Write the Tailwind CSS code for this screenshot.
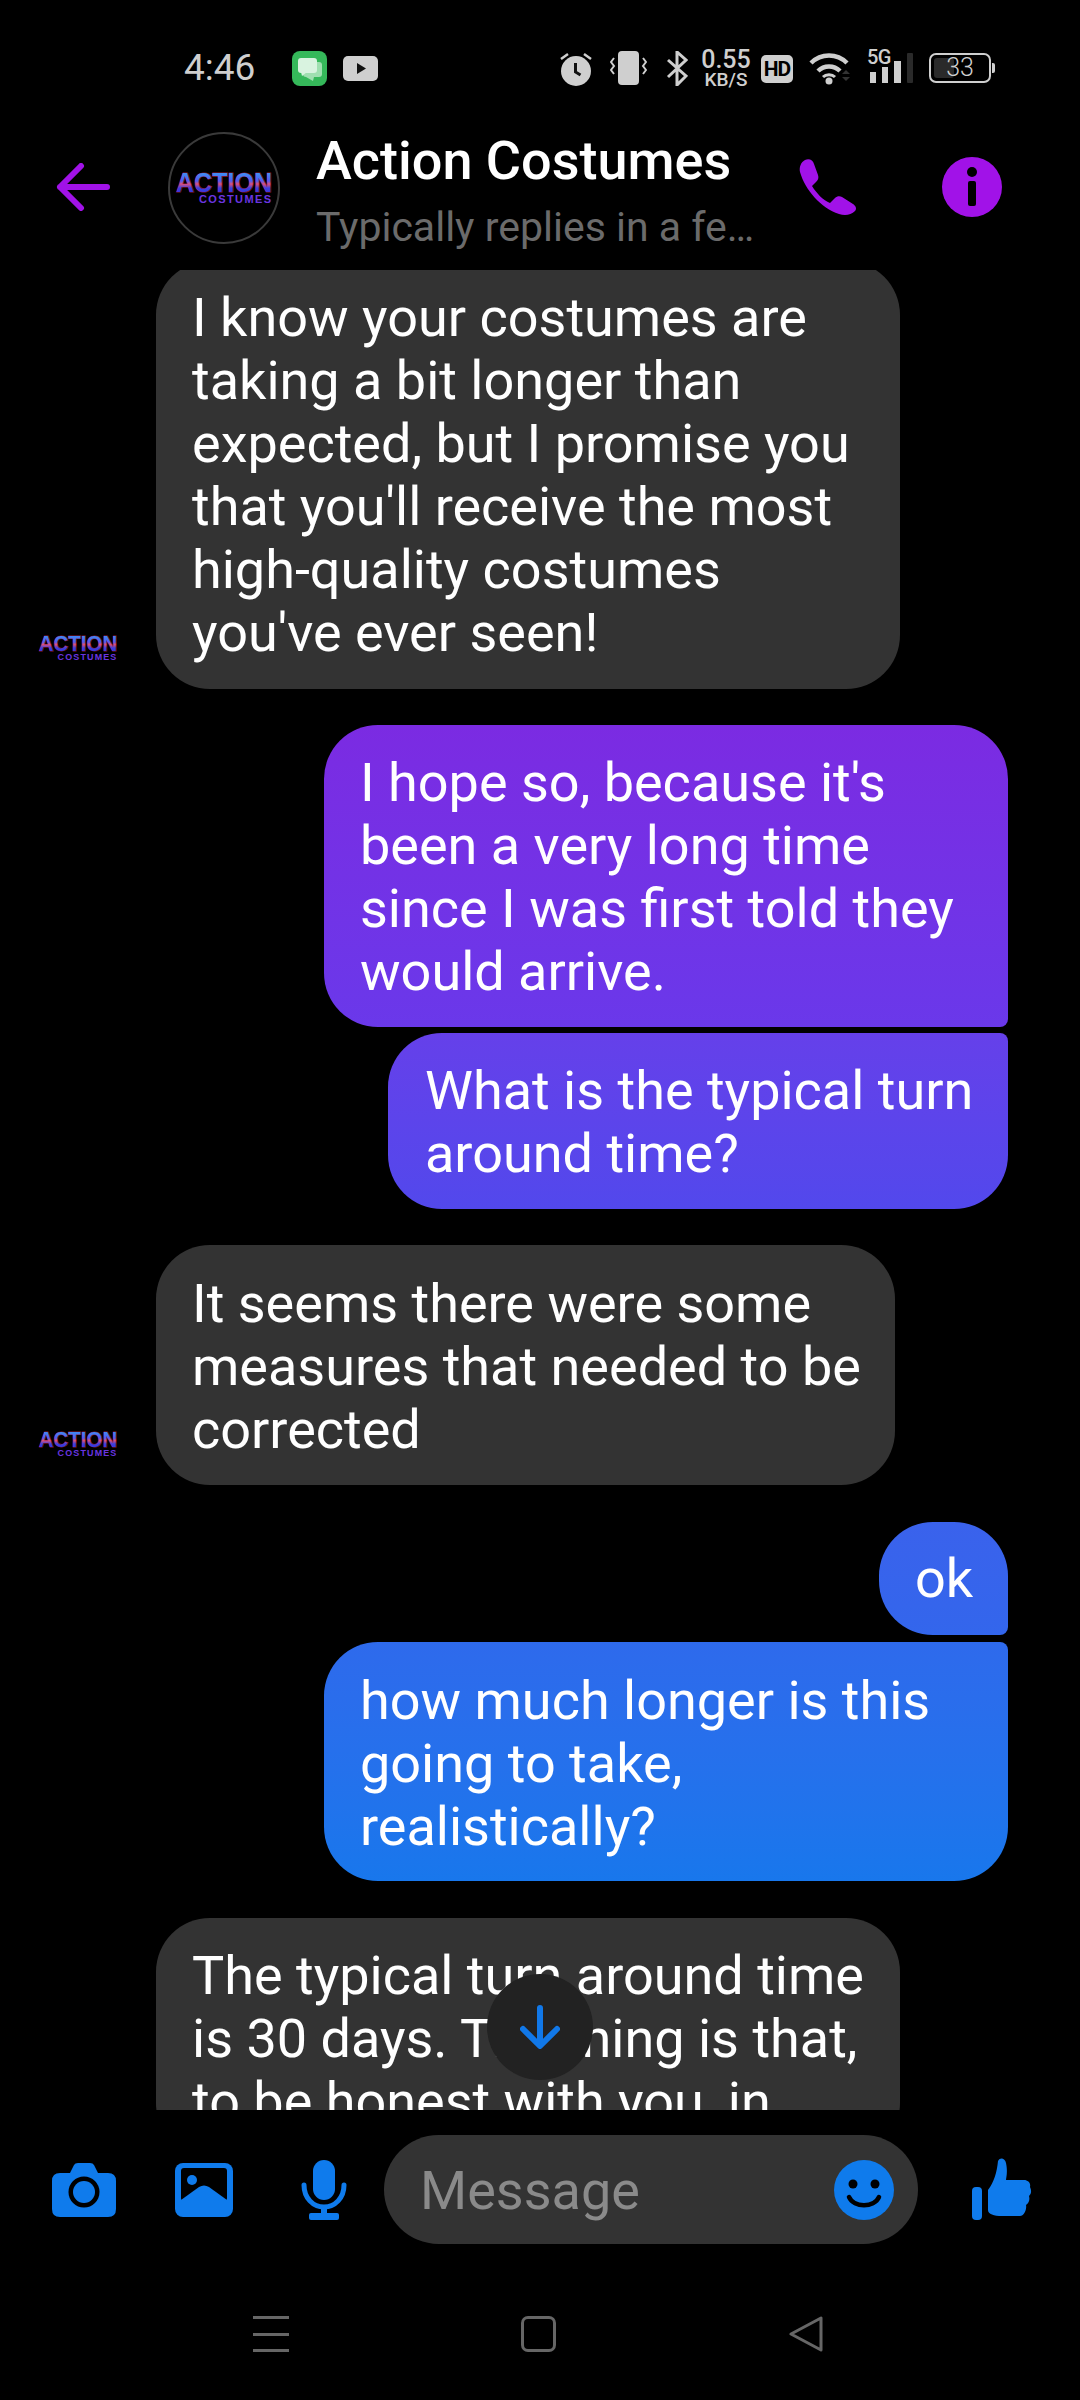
<!doctype html>
<html lang="en">
<head>
  <meta charset="UTF-8">
  <meta name="viewport" content="width=device-width, initial-scale=1.0">
  <title>Action Costumes</title>
  <script src="https://cdn.jsdelivr.net/npm/@tailwindcss/browser@4"></script>
</head>
<body class="bg-black">
  <div class="w-[1080px] h-[2400px] bg-black flex flex-col overflow-hidden font-['Roboto',sans-serif]">

    <!-- status bar -->
    <div class="h-[132px] pt-[50px] pl-[184px] flex items-start text-[#cfcfcf]">
      <span class="text-[37px] leading-[36px] w-[108px]">4:46</span>
      <svg class="w-[35px] h-[35px] mt-[1px]" viewBox="0 0 35 35">
        <rect width="35" height="35" rx="8" fill="#35b85a"/>
        <rect x="11" y="11" width="19" height="15" rx="3" fill="#9fdfb0"/>
        <path d="M14 26h8l-1 4z" fill="#9fdfb0"/>
        <rect x="6" y="7" width="19" height="15" rx="3" fill="#d9f3e0"/>
        <path d="M9 21h6l-5 4z" fill="#d9f3e0"/>
      </svg>
      <svg class="w-[35px] h-[25px] mt-[6px] ml-[16px]" viewBox="0 0 35 25">
        <rect width="35" height="25" rx="5" fill="#cfcfcf"/>
        <path d="M14 7l9 5.500-9 5.500z" fill="#111"/>
      </svg>

      <svg class="w-[32px] h-[35px] ml-[182px] mt-[1px]" viewBox="0 0 32 35">
        <circle cx="16" cy="20" r="15" fill="#cfcfcf"/>
        <path d="M15.500 12v9l5 3" fill="none" stroke="#111" stroke-width="3"/>
        <path d="M1 8l7-5M31 8l-7-5" stroke="#cfcfcf" stroke-width="2.500"/>
      </svg>
      <svg class="w-[37px] h-[35px] ml-[18px] mt-[1px]" viewBox="0 0 37 35">
        <rect x="8" y="0" width="21" height="34" rx="4" fill="#cfcfcf"/>
        <path d="M4 7l-3 4 3 4-3 4 3 4M33 7l3 4-3 4 3 4-3 4" fill="none" stroke="#cfcfcf" stroke-width="2"/>
      </svg>
      <svg class="w-[22px] h-[35px] ml-[19px] mt-[1px]" viewBox="0 0 22 35">
        <path d="M2 9l18 16-9 9V1l9 8L2 26" fill="none" stroke="#cfcfcf" stroke-width="3"/>
      </svg>
      <div class="w-[52px] ml-[12px] mt-[-2px] flex flex-col items-center font-medium">
        <span class="text-[25px] leading-[23px]">0.55</span>
        <span class="text-[19px] leading-[17px]">KB/S</span>
      </div>
      <div class="w-[32px] h-[28px] ml-[9px] mt-[5px] rounded-[5px] bg-[#cfcfcf] text-black text-[21px] leading-[28px] font-bold text-center tracking-[-1px]">HD</div>
      <svg class="w-[42px] h-[36px] ml-[16px]" viewBox="0 0 42 36">
        <path d="M2 13C12 3 28 3 38 13M9 21C15 15 25 15 31 21" fill="none" stroke="#cfcfcf" stroke-width="4.500"/>
        <path d="M14 27C17 24 23 24 26 27" fill="none" stroke="#cfcfcf" stroke-width="3"/>
        <circle cx="20" cy="31" r="3.500" fill="#cfcfcf"/>
        <path d="M33 24l4-4 4 4zM33 27l4 4 4-4z" fill="#333"/>
      </svg>
      <svg class="w-[48px] h-[36px] ml-[16px] overflow-visible" viewBox="0 0 48 36">
        <text x="0" y="14" font-family="Roboto" font-weight="500" font-size="20" letter-spacing="-0.5" fill="#cfcfcf">5G</text>
        <rect x="3" y="22" width="6" height="11" fill="#cfcfcf"/>
        <rect x="15" y="17" width="6" height="16" fill="#cfcfcf"/>
        <rect x="27" y="11" width="7" height="22" fill="#cfcfcf"/>
        <rect x="40" y="3" width="6" height="30" rx="1" fill="#2a2a2a"/>
      </svg>
      <div class="relative w-[62px] h-[30px] ml-[14px] mt-[3px] rounded-[7px] border-2 border-[#cfcfcf]">
        <div class="absolute left-[3px] top-[3px] bottom-[3px] w-[20px] rounded-[3px] bg-[#2a2a2a]"></div>
        <span class="absolute inset-0 text-center text-[25px] leading-[26px] font-light">33</span>
      </div>
      <div class="w-[3px] h-[10px] mt-[13px] ml-[1px] bg-[#cfcfcf] rounded-r-[2px]"></div>
    </div>

    <!-- header -->
    <div class="h-[138px] flex items-start">
      <svg class="w-[54px] h-[48px] ml-[56px] mt-[31px]" viewBox="0 0 54 48">
        <path d="M25 3L4 24l21 21M4 24h47" fill="none" stroke="#a112e8" stroke-width="6" stroke-linecap="round" stroke-linejoin="round"/>
      </svg>
      <div class="w-[112px] h-[112px] ml-[58px] rounded-full border-2 border-[#3a3a3a] flex items-center justify-center">
        <svg class="w-[98px] h-[34px] overflow-visible" viewBox="0 0 98 34">
          <defs>
            <linearGradient id="logoFill" x1="0" y1="0" x2="0" y2="1">
              <stop offset="0" stop-color="#35b5f5"/>
              <stop offset="0.45" stop-color="#4f5cf0"/>
              <stop offset="0.55" stop-color="#d9507f"/>
              <stop offset="0.68" stop-color="#3a40e0"/>
              <stop offset="1" stop-color="#3a2ad0"/>
            </linearGradient>
          </defs>
          <text x="1" y="21" textLength="96" lengthAdjust="spacingAndGlyphs" font-family="Liberation Sans" font-weight="700" font-size="28" fill="url(#logoFill)" stroke="#8a1530" stroke-width="1.2" paint-order="stroke">ACTION</text>
          <text x="24" y="32" textLength="72" lengthAdjust="spacing" font-family="Liberation Sans" font-weight="700" font-size="11" fill="#6a35e0">COSTUMES</text>
        </svg>
      </div>
      <div class="w-[470px] ml-[36px] flex flex-col">
        <span class="text-[54px] leading-[58px] font-medium text-white whitespace-nowrap">Action Costumes</span>
        <span class="text-[41px] leading-[50px] text-[#6b6b6b] mt-[12px] whitespace-nowrap">Typically replies in a fe…</span>
      </div>
      <svg class="w-[58px] h-[58px] ml-[13px] mt-[26px]" viewBox="0 0 58 58">
        <path d="M6 2C10 0 14 2 15 6L19 17C20 20 19 22 17 24L13 28C18 36 24 42 31 45L36 40C38 38 41 38 43 39L54 46C57 48 58 51 56 53C52 57 46 58 40 56C22 50 6 32 1 14C0 9 2 4 6 2Z" fill="#a112e8"/>
      </svg>
      <svg class="w-[60px] h-[60px] ml-[85px] mt-[25px]" viewBox="0 0 60 60">
        <circle cx="30" cy="30" r="30" fill="#a112e8"/>
        <circle cx="30" cy="15" r="5" fill="#000"/>
        <rect x="26" y="24" width="8" height="25" rx="2" fill="#000"/>
      </svg>
    </div>

    <!-- messages -->
    <div class="relative h-[1840px] overflow-hidden text-white text-[54px] leading-[63px]">
      <div class="flex flex-col mt-[-9px]">
        <div class="flex items-end pl-[38px]">
          <svg class="w-[80px] h-[30px] mr-[38px] mb-[26px] overflow-visible" viewBox="0 0 98 34">
            <text x="1" y="21" textLength="96" lengthAdjust="spacingAndGlyphs" font-family="Liberation Sans" font-weight="700" font-size="28" fill="url(#logoFill)" stroke="#8a1530" stroke-width="1.2" paint-order="stroke">ACTION</text>
            <text x="24" y="32" textLength="72" lengthAdjust="spacing" font-family="Liberation Sans" font-weight="700" font-size="11" fill="#6a35e0">COSTUMES</text>
          </svg>
          <div class="w-[744px] px-[36px] py-[25px] rounded-[54px] bg-[#333333] whitespace-nowrap">I know your costumes are<br>taking a bit longer than<br>expected, but I promise you<br>that you'll receive the most<br>high-quality costumes<br>you've ever seen!</div>
        </div>

        <div class="flex flex-col items-end pr-[72px] mt-[36px]">
          <div class="w-[684px] px-[36px] pt-[26px] pb-[24px] rounded-[54px] rounded-br-[8px] bg-linear-to-b from-[#7b2be2] to-[#6a38ea] whitespace-nowrap">I hope so, because it's<br>been a very long time<br>since I was first told they<br>would arrive.</div>
          <div class="w-[620px] mt-[6px] px-[37px] pt-[26px] pb-[24px] rounded-[54px] rounded-tr-[8px] bg-linear-to-b from-[#6540ea] to-[#5248ec] whitespace-nowrap">What is the typical turn<br>around time?</div>
        </div>

        <div class="flex items-end pl-[38px] mt-[36px]">
          <svg class="w-[80px] h-[30px] mr-[38px] mb-[26px] overflow-visible" viewBox="0 0 98 34">
            <text x="1" y="21" textLength="96" lengthAdjust="spacingAndGlyphs" font-family="Liberation Sans" font-weight="700" font-size="28" fill="url(#logoFill)" stroke="#8a1530" stroke-width="1.2" paint-order="stroke">ACTION</text>
            <text x="24" y="32" textLength="72" lengthAdjust="spacing" font-family="Liberation Sans" font-weight="700" font-size="11" fill="#6a35e0">COSTUMES</text>
          </svg>
          <div class="w-[739px] px-[36px] pt-[27px] pb-[24px] rounded-[54px] bg-[#333333] whitespace-nowrap">It seems there were some<br>measures that needed to be<br>corrected</div>
        </div>

        <div class="flex flex-col items-end pr-[72px] mt-[37px]">
          <div class="w-[129px] h-[113px] px-[36px] py-[25px] rounded-[54px] rounded-br-[8px] bg-linear-to-b from-[#3a62ec] to-[#3366ec]">ok</div>
          <div class="w-[684px] mt-[7px] px-[36px] pt-[27px] pb-[23px] rounded-[54px] rounded-tr-[8px] bg-linear-to-b from-[#2e6aec] to-[#1877ec] whitespace-nowrap">how much longer is this<br>going to take,<br>realistically?</div>
        </div>

        <div class="flex pl-[156px] mt-[37px]">
          <div class="w-[744px] px-[36px] pt-[26px] pb-[24px] rounded-[54px] bg-[#333333] whitespace-nowrap">The typical turn around time<br>is 30 days. The thing is that,<br>to be honest with you, in</div>
        </div>
      </div>

      <div class="absolute left-[487px] top-[1704px] w-[106px] h-[106px] rounded-full bg-[#222222] flex items-center justify-center">
        <svg class="w-[40px] h-[44px]" viewBox="0 0 40 44">
          <path d="M20 3v36M3 24l17 17 17-17" fill="none" stroke="#1178e8" stroke-width="6" stroke-linecap="round" stroke-linejoin="round"/>
        </svg>
      </div>
    </div>

    <!-- composer -->
    <div class="h-[160px] pt-[25px] flex items-start">
      <svg class="w-[64px] h-[54px] ml-[52px] mt-[28px]" viewBox="0 0 64 54">
        <path d="M18 10L22 2Q23 0 26 0H38Q41 0 42 2L46 10H56Q64 10 64 18V46Q64 54 56 54H8Q0 54 0 46V18Q0 10 8 10Z" fill="#0f7bec"/>
        <circle cx="32" cy="29" r="15.500" fill="#000"/>
        <circle cx="32" cy="29" r="11" fill="#0f7bec"/>
      </svg>
      <svg class="w-[58px] h-[54px] ml-[59px] mt-[28px]" viewBox="0 0 58 54">
        <rect width="58" height="54" rx="8" fill="#0f7bec"/>
        <rect x="6" y="5" width="46" height="33" rx="3" fill="#000"/>
        <circle cx="17" cy="17" r="5" fill="#0f7bec"/>
        <path d="M6 37L24 24Q29 21 34 24L52 37V42H6Z" fill="#0f7bec"/>
      </svg>
      <svg class="w-[46px] h-[60px] ml-[68px] mt-[25px]" viewBox="0 0 46 60">
        <rect x="12" y="0" width="22" height="40" rx="11" fill="#0f7bec"/>
        <path d="M3 25C3 38 12 47 23 47C34 47 43 38 43 25" fill="none" stroke="#0f7bec" stroke-width="5" stroke-linecap="round"/>
        <rect x="20" y="46" width="6" height="9" fill="#0f7bec"/>
        <rect x="8" y="53" width="30" height="7" rx="2" fill="#0f7bec"/>
      </svg>
      <div class="w-[534px] h-[109px] ml-[37px] pl-[36px] pr-[24px] rounded-[55px] bg-[#333333] flex items-center justify-between">
        <span class="text-[54px] text-[#8a8a8a] mt-[2px]">Message</span>
        <svg class="w-[60px] h-[60px]" viewBox="0 0 60 60">
          <circle cx="30" cy="30" r="30" fill="#0f7bec"/>
          <circle cx="19" cy="24" r="4.500" fill="#000"/>
          <circle cx="41" cy="24" r="4.500" fill="#000"/>
          <path d="M15 37C20 48 40 48 45 37" fill="none" stroke="#000" stroke-width="4.500" stroke-linecap="round"/>
        </svg>
      </div>
      <svg class="w-[60px] h-[62px] ml-[54px] mt-[23px]" viewBox="0 0 60 62">
        <rect x="0" y="29" width="10" height="33" rx="4" fill="#0f7bec"/>
        <path d="M26 3C28 -1 33 0 34 5C36 14 34 20 34 22H52C56 22 59 25 58 29C60 33 59 36 57 38C58 42 57 45 54 47C55 51 52 58 48 58H30C22 58 16 56 16 52V32C22 24 25 14 26 3Z" fill="#0f7bec"/>
      </svg>
    </div>

    <!-- system nav -->
    <div class="flex-1 pt-[46px] flex items-start text-[#666]">
      <div class="w-[36px] h-[36px] ml-[253px] flex flex-col justify-between">
        <div class="h-[3px] bg-[#666]"></div>
        <div class="h-[3px] bg-[#666]"></div>
        <div class="h-[3px] bg-[#666]"></div>
      </div>
      <div class="w-[35px] h-[36px] ml-[232px] rounded-[7px] border-[3px] border-[#666]"></div>
      <svg class="w-[36px] h-[36px] ml-[232px]" viewBox="0 0 36 36">
        <path d="M33 2V34L3 18Z" fill="none" stroke="#666" stroke-width="3" stroke-linejoin="round"/>
      </svg>
    </div>
  </div>
</body>
</html>
